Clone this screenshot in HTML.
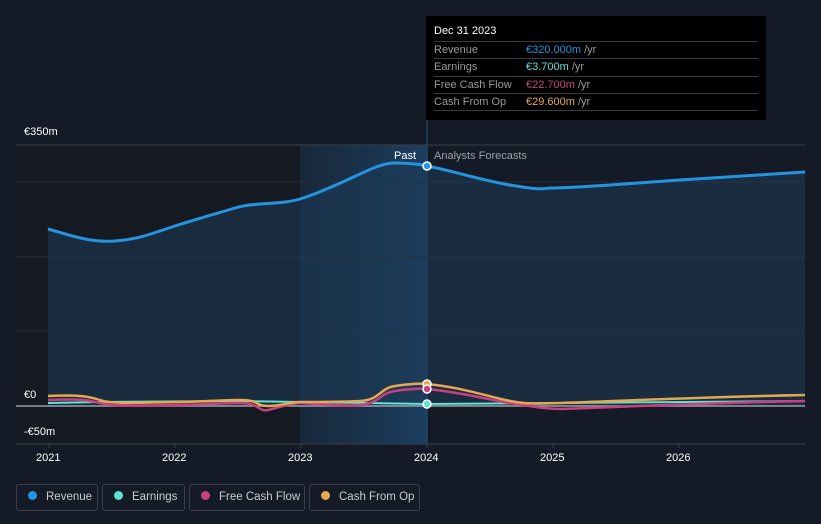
<!DOCTYPE html>
<html><head><style>
html,body{margin:0;width:821px;height:524px;overflow:hidden}
body{background:#151b26;font-family:"Liberation Sans",sans-serif;position:relative}
.t{position:absolute;color:#fff;font-size:11px}
.tip{position:absolute;left:426px;top:16px;width:340px;height:104px;background:#000;}
.tip .r{position:absolute;left:8px;width:324px;border-top:1px solid #3a3a3a;font-size:11px;color:#9a9a9a;height:16px;line-height:16px}
.tip .r span{position:absolute;left:92px}
.leg{position:absolute;top:484px;height:27px;border:1px solid #3a404b;border-radius:3px;color:#c9ccd1;font-size:11.5px;line-height:25px;box-sizing:border-box;white-space:nowrap;overflow:hidden}
.leg i{display:inline-block;width:9px;height:9px;border-radius:50%;margin:0 9px 0 11px;vertical-align:-0px}
</style></head><body>
<svg width="821" height="524" style="position:absolute;left:0;top:0">
<defs><linearGradient id="pg" x1="0" x2="1"><stop offset="0" stop-color="#1b3550" stop-opacity=".5"/><stop offset="1" stop-color="#1b3f60"/></linearGradient></defs>
<rect x="16" y="145" width="284" height="299" fill="#141922"/>
<rect x="300" y="145" width="127" height="299" fill="url(#pg)"/>
<line x1="16" x2="805" y1="145" y2="145" stroke="#3a404b"/>
<line x1="16" x2="805" y1="182" y2="182" stroke="#262c37"/>
<line x1="16" x2="805" y1="257" y2="257" stroke="#262c37"/>
<line x1="16" x2="805" y1="331" y2="331" stroke="#262c37"/>
<line x1="16" x2="805" y1="444" y2="444" stroke="#3a404b"/>
<line x1="427" x2="427" y1="120" y2="444" stroke="#2a4f73"/>
<path d="M48,229 C70,235 90,243 115,241 S150,234 175,226 S215,214 235,208 S280,205 300,199 S345,181 360,174 S385,163 395,163 S420,164 427,166 C450,170 480,180 510,185 S540,189 550,188 C580,188 620,184 680,180 S760,175 805,172 L805,406 L48,406Z" fill="#1d3a55" opacity=".55"/>
<path d="M48,229 C70,235 90,243 115,241 S150,234 175,226 S215,214 235,208 S280,205 300,199 S345,181 360,174 S385,163 395,163 S420,164 427,166 C450,170 480,180 510,185 S540,189 550,188 C580,188 620,184 680,180 S760,175 805,172" fill="none" stroke="#2394e0" stroke-width="3"/>
<line x1="16" x2="805" y1="406" y2="406" stroke="#9a9ea6" stroke-width="1.5"/>
<path d="M48,403 L100,402 L240,401 L300,402 L427,404 L560,403 L805,401" fill="none" stroke="#5fe3d3" stroke-width="2"/>
<path d="M48,400 C70,399 85,399 100,403 S150,405 175,405 S220,403 240,403 S258,412 268,410 S290,403 300,403 S340,407 360,405 S380,393 395,391 S420,388 427,389 C460,392 490,400 510,403 S545,409 560,409 C620,407 700,403 805,401" fill="none" stroke="#c8407f" stroke-width="2.5"/>
<path d="M48,396 C70,395 85,395 100,400 S150,402 175,402 S220,400 240,400 S255,406 268,406 S290,402 300,402 S340,402 360,401 S380,388 395,386 S420,383 427,384 C460,387 490,397 510,401 S545,403 560,403 C620,401 700,397 805,395" fill="none" stroke="#e6a952" stroke-width="2.5"/>
<circle cx="427" cy="166" r="4" fill="#2394e0" stroke="#fff" stroke-width="1.5"/>
<circle cx="427" cy="384" r="4" fill="#e6a952" stroke="#fff" stroke-width="1.5"/>
<circle cx="427" cy="389" r="4" fill="#c8407f" stroke="#fff" stroke-width="1.5"/>
<circle cx="427" cy="404" r="4" fill="#5fe3d3" stroke="#fff" stroke-width="1.5"/>
<g stroke="#3a404b"><line x1="49" x2="49" y1="444" y2="448"/><line x1="175" x2="175" y1="444" y2="448"/><line x1="301" x2="301" y1="444" y2="448"/><line x1="427" x2="427" y1="444" y2="448"/><line x1="553" x2="553" y1="444" y2="448"/><line x1="679" x2="679" y1="444" y2="448"/></g>
</svg>
<div class="t" style="left:24px;top:126px">€350m</div>
<div class="t" style="left:24px;top:389px">€0</div>
<div class="t" style="left:24px;top:426px">-€50m</div>
<div class="t" style="left:394px;top:150px">Past</div>
<div class="t" style="left:434px;top:150px;color:#9aa0a8">Analysts Forecasts</div>
<div class="t" style="left:36px;top:452px">2021</div>
<div class="t" style="left:162px;top:452px">2022</div>
<div class="t" style="left:288px;top:452px">2023</div>
<div class="t" style="left:414px;top:452px">2024</div>
<div class="t" style="left:540px;top:452px">2025</div>
<div class="t" style="left:666px;top:452px">2026</div>
<div class="tip">
<div style="position:absolute;left:8px;top:9px;color:#fff;font-size:11px">Dec 31 2023</div>
<div class="r" style="top:25px">Revenue<span><b style="font-weight:normal;color:#2394e0">€320.000m</b> /yr</span></div>
<div class="r" style="top:42px">Earnings<span><b style="font-weight:normal;color:#5fe3d3">€3.700m</b> /yr</span></div>
<div class="r" style="top:60px">Free Cash Flow<span><b style="font-weight:normal;color:#c8407f">€22.700m</b> /yr</span></div>
<div class="r" style="top:77px">Cash From Op<span><b style="font-weight:normal;color:#e6a952">€29.600m</b> /yr</span></div>
<div class="r" style="top:94px;height:0"></div>
</div>
<div class="leg" style="left:16px;width:82px"><i style="background:#2394e0"></i>Revenue</div>
<div class="leg" style="left:102px;width:83px"><i style="background:#5fe3d3"></i>Earnings</div>
<div class="leg" style="left:189px;width:116px"><i style="background:#c8407f"></i>Free Cash Flow</div>
<div class="leg" style="left:309px;width:111px"><i style="background:#e6a952"></i>Cash From Op</div>
</body></html>
